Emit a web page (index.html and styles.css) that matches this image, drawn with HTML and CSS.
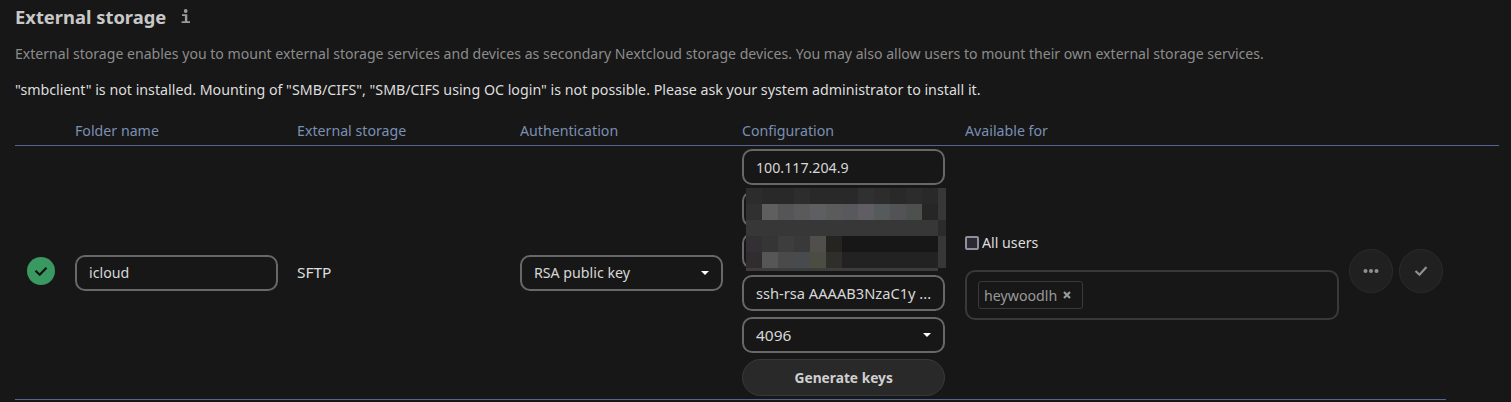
FILE: index.html
```html
<!DOCTYPE html>
<html lang="en">
<head>
<meta charset="utf-8">
<title>External storage</title>
<link rel="stylesheet" href="styles.css">
</head>
<body>
<main class="section">
  <header class="heading">
    <h2 class="title">External storage</h2>
    <svg class="info" width="10" height="15" viewBox="0 0 10 15" fill="#9b9b9b"><circle cx="4.700" cy="2" r="1.900"/><path d="M1 5.300h5.300v7H9V14H.6v-1.700H3.900V7H1z"/></svg>
  </header>
  <p class="hint">External storage enables you to mount external storage services and devices as secondary Nextcloud storage devices. You may also allow users to mount their own external storage services.</p>
  <p class="warning">"smbclient" is not installed. Mounting of "SMB/CIFS", "SMB/CIFS using OC login" is not possible. Please ask your system administrator to install it.</p>
  <div class="row head">
    <span></span><span class="label">Folder name</span><span class="label">External storage</span><span class="label">Authentication</span><span class="label">Configuration</span><span class="label">Available for</span>
  </div>
  <div class="row mount">
    <div class="status"><svg width="28" height="28" viewBox="0 0 28 28"><circle cx="14" cy="14" r="14" fill="#3a9861"/><path d="M8.500 13.800l4.200 4 6.800-7" fill="none" stroke="#111" stroke-width="2.200"/></svg></div>
    <div class="field"><span class="label">icloud</span></div>
    <div class="backend">SFTP</div>
    <div class="field"><span class="label">RSA public key</span><svg class="caret" width="8" height="4" viewBox="0 0 8 4"><path d="M0 0h8L4 4z" fill="#fff"/></svg></div>
    <div class="config">
      <div class="field"><span class="label">100.117.204.9</span></div>
      <div class="field"></div>
      <div class="field"></div>
      <div class="field"><span class="label key">ssh-rsa AAAAB3NzaC1y ...</span></div>
      <div class="field"><span class="label bits">4096</span><svg class="caret" width="8" height="4" viewBox="0 0 8 4"><path d="M0 0h8L4 4z" fill="#fff"/></svg></div>
      <div class="generate"><span class="generate-text">Generate keys</span></div>
      <svg class="mosaic" width="200" height="83" viewBox="0 0 200 83" shape-rendering="crispEdges">
        <rect width="200" height="83" fill="#373737"/>
        <rect width="192" height="16" fill="#292929"/>
        <rect width="16" height="16" fill="#2c2c2c"/><rect x="48" width="16" height="16" fill="#2d2d2d"/><rect x="112" width="16" height="16" fill="#303030"/><rect x="128" width="16" height="16" fill="#2d2d2d"/><rect x="160" width="16" height="16" fill="#2c2c2c"/>
        <rect y="16" width="16" height="16" fill="#303030"/><rect x="16" y="16" width="16" height="16" fill="#5f5f5f"/><rect x="32" y="16" width="16" height="16" fill="#555558"/><rect x="48" y="16" width="16" height="16" fill="#5a5a5a"/><rect x="64" y="16" width="16" height="16" fill="#5d5f62"/><rect x="80" y="16" width="16" height="16" fill="#5a5b5a"/><rect x="96" y="16" width="16" height="16" fill="#57595d"/><rect x="112" y="16" width="16" height="16" fill="#605d64"/><rect x="128" y="16" width="16" height="16" fill="#555b5b"/><rect x="144" y="16" width="16" height="16" fill="#535357"/><rect x="160" y="16" width="16" height="16" fill="#4d514d"/><rect x="176" y="16" width="16" height="16" fill="#262626"/>
        <rect x="192" y="32" width="8" height="16" fill="#2b2b2b"/>
        <rect y="48" width="16" height="16" fill="#323035"/><rect x="16" y="48" width="16" height="16" fill="#353535"/><rect x="32" y="48" width="16" height="16" fill="#3d3d3d"/><rect x="48" y="48" width="16" height="16" fill="#393939"/><rect x="64" y="48" width="16" height="16" fill="#514f4b"/><rect x="80" y="48" width="16" height="16" fill="#252421"/><rect x="96" y="48" width="96" height="16" fill="#171717"/>
        <rect y="64" width="16" height="16" fill="#312d2f"/><rect x="16" y="64" width="16" height="16" fill="#565656"/><rect x="32" y="64" width="16" height="16" fill="#4a4a4a"/><rect x="48" y="64" width="16" height="16" fill="#484b4e"/><rect x="64" y="64" width="16" height="16" fill="#4b4d43"/><rect x="80" y="64" width="16" height="16" fill="#302e2b"/><rect x="96" y="64" width="96" height="16" fill="#222"/>
        <rect y="80" width="192" height="3" fill="#3d3d3d"/><rect x="192" y="80" width="8" height="3" fill="#171717"/>
      </svg>
    </div>
    <div class="available">
      <div class="all"><span class="checkbox"></span><span class="label">All users</span></div>
      <div class="users"><div class="tag"><span class="label">heywoodlh</span><svg width="8" height="8" viewBox="0 0 8 8"><path d="M1 1l6 6M7 1L1 7" stroke="#999" stroke-width="2.200"/></svg></div></div>
    </div>
    <div class="actions">
      <div class="round"><svg width="16" height="6" viewBox="0 0 16 6" fill="#909090"><circle cx="2.500" cy="3" r="2"/><circle cx="8" cy="3" r="2"/><circle cx="13.500" cy="3" r="2"/></svg></div>
      <div class="round"><svg width="14" height="12" viewBox="0 0 14 12"><path d="M1.500 6l4 3.700L12.500 2" fill="none" stroke="#909090" stroke-width="2.200"/></svg></div>
    </div>
  </div>
</main>
</body>
</html>
```
FILE: styles.css
```css
* { box-sizing: border-box; }
body { margin: 0; background: #171717; color: #dedede; font: 15px/20px "Noto Sans", sans-serif; height: 402px; overflow: hidden; white-space: nowrap; }
.section { padding: 5px 0 0 15px; }
.heading { display: flex; align-items: center; height: 24px; gap: 15px; }
.title { margin: 0; font-size: 18px; line-height: 24px; font-weight: 700; color: #c8c8c8; width: 151px; transform: scaleX(1.02); transform-origin: left; }
.info { margin-top: -1px; }
.hint { margin: 14px 0 0; color: #8c8c8c; width: max-content; transform: scaleX(.9385); transform-origin: left; }
.warning { margin: 16px 0 0; width: max-content; transform: scaleX(.949); transform-origin: left; }
.label { transform: scaleX(.946); transform-origin: left; }
.key { transform: scaleX(.976); }
.bits { transform: scaleX(1.03); }
.row { display: grid; grid-template-columns: 40.500px 202.500px 203px 203px 203px 374px 94px; column-gap: 19.500px; }
.head { margin-top: 21px; height: 26px; width: 1484px; border-bottom: 1px solid #52678f; color: #7b8fb3; }
.mount { height: 254px; width: 1431px; border-bottom: 1px solid #52678f; align-items: center; }
.status { padding-left: 12px; height: 28px; margin-top: -3px; }
.status svg, .caret, .mosaic { display: block; }
.backend { margin-top: -2px; transform: scaleX(1.03); transform-origin: left; }
.field { height: 36px; width: 203px; border: 2px solid #686868; border-radius: 10px; padding: 0 12px; display: flex; align-items: center; justify-content: space-between; color: #d8d8d8; }
.field .label { margin-top: -1px; }
.config { position: relative; display: flex; flex-direction: column; gap: 6px; }
.generate { height: 37px; width: 203px; border: 1px solid #393939; border-radius: 19px; background: #292929; display: flex; align-items: center; justify-content: center; font-weight: 700; color: #d0d0d0; }
.generate-text { margin-top: -1px; transform: scaleX(.916); }
.mosaic { position: absolute; left: 4px; top: 39px; }
.available { margin-top: 7px; }
.all { display: flex; align-items: center; gap: 3px; height: 20px; }
.all .label { margin-top: -1px; }
.checkbox { width: 14px; height: 14px; border: 2px solid #8f8f9d; border-radius: 2px; background: #2b2a33; }
.users { height: 50px; margin-top: 17px; border: 2px solid #393939; border-radius: 10px; padding: 9px 11px; }
.tag { width: 105px; height: 28px; border: 1px solid #393939; border-radius: 3px; padding: 0 11px 0 5px; display: flex; align-items: center; justify-content: space-between; color: #999; }
.actions { display: flex; gap: 6px; margin: -3px 0 0 -9px; }
.round { width: 44px; height: 44px; flex: none; border: 1px solid #2b2b2b; border-radius: 50%; background: #202020; display: flex; align-items: center; justify-content: center; }
```
